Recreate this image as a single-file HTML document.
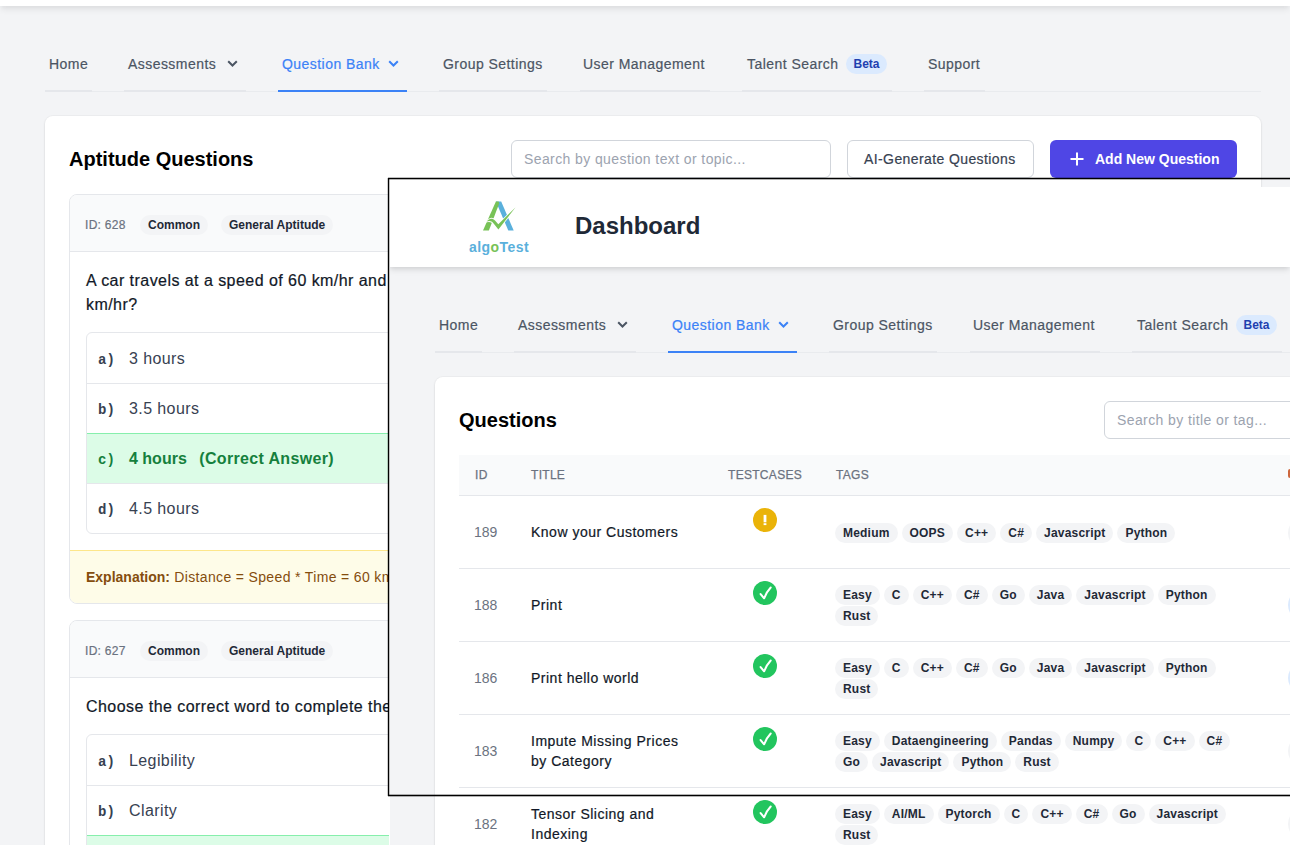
<!DOCTYPE html>
<html><head><meta charset="utf-8">
<style>
*{box-sizing:border-box;margin:0;padding:0}
html,body{width:1290px;height:845px;overflow:hidden}
body{position:relative;background:#f3f4f6;font-family:"Liberation Sans",sans-serif;color:#111827}
.a{position:absolute;white-space:nowrap}
.t14{font-size:14px;line-height:20px}
.t12{font-size:12px;line-height:16px}
.t16{font-size:16px;line-height:24px}
.nav{color:#4b5563;letter-spacing:.45px;-webkit-text-stroke:.2px currentColor}
.act{color:#3b82f6}
.tabline{position:absolute;height:1px;background:#e5e7eb}
.chev{position:absolute;width:11px;height:7px}
.card{position:absolute;background:#fff;border-radius:8px;box-shadow:0 0 0 1px rgba(0,0,0,.025),0 1px 3px rgba(0,0,0,.08)}
.badge{position:absolute;height:20px;border-radius:10px;background:#f3f4f6;color:#1f2937;font-size:12px;line-height:20px;font-weight:bold;padding:0 8px;white-space:nowrap}
.qcard{position:absolute;border:1px solid #e5e7eb;border-radius:8px;background:#fff;overflow:hidden}
.qhead{position:absolute;left:0;right:0;top:0;height:57px;background:#f9fafb;border-bottom:1px solid #e5e7eb}
.opts{position:absolute;border:1px solid #e5e7eb;border-radius:6px;overflow:hidden;background:#fff}
.opt{position:absolute;left:0;right:0;height:50px;border-top:1px solid #e5e7eb}
.ol{position:absolute;left:12px;font-family:"Liberation Mono",monospace;font-weight:bold;font-size:14px;color:#374151}
.ot{position:absolute;left:42px;font-size:16px;color:#374151;letter-spacing:.4px}
.tag{display:inline-block;height:20px;border-radius:10px;background:#f3f4f6;color:#1f2937;font-size:12px;line-height:20px;font-weight:bold;padding:0 8px;margin-right:4px;vertical-align:top;letter-spacing:.2px}
.tagl{position:absolute;left:835px;white-space:nowrap;height:21px}
.rowb{position:absolute;left:459px;right:0;height:1px;background:#e5e7eb}
.rid{position:absolute;left:474px;font-size:14px;line-height:20px;color:#6b7280}
.rtl{position:absolute;left:531px;font-size:14px;line-height:20px;color:#111827;letter-spacing:.5px;white-space:nowrap;-webkit-text-stroke:.2px #111827}
.ico{position:absolute;left:753px;width:24px;height:24px;border-radius:12px}
.th{position:absolute;top:467px;font-size:12px;line-height:16px;color:#6b7280;letter-spacing:.3px;-webkit-text-stroke:.25px #6b7280}
</style></head>
<body>
<!-- ============ BACKGROUND PAGE ============ -->
<div class="a" style="left:0;top:0;width:1290px;height:6px;background:#fff;box-shadow:0 4px 6px -1px rgba(0,0,0,.1),0 2px 4px -1px rgba(0,0,0,.06)"></div>

<!-- nav -->
<div class="tabline" style="left:45px;top:91px;width:1216px;background:#e9ebee"></div>
<div class="tabline" style="left:45px;top:90px;width:47px;height:2px"></div><div class="tabline" style="left:124px;top:90px;width:122px;height:2px"></div><div class="tabline" style="left:439px;top:90px;width:108px;height:2px"></div><div class="tabline" style="left:580px;top:90px;width:130px;height:2px"></div><div class="tabline" style="left:742px;top:90px;width:150px;height:2px"></div><div class="tabline" style="left:924px;top:90px;width:61px;height:2px"></div>
<div class="a t14 nav" style="left:49px;top:54px">Home</div>
<div class="a t14 nav" style="left:128px;top:54px">Assessments</div>
<svg class="chev" style="left:227px;top:60px" viewBox="0 0 11 7"><path d="M1.2 1.2l4.3 4.3 4.3-4.3" fill="none" stroke="#4b5563" stroke-width="2"/></svg>
<div class="a t14 nav act" style="left:282px;top:54px">Question Bank</div>
<svg class="chev" style="left:388px;top:60px" viewBox="0 0 11 7"><path d="M1.2 1.2l4.3 4.3 4.3-4.3" fill="none" stroke="#3b82f6" stroke-width="2"/></svg>
<div class="a" style="left:278px;top:90px;width:129px;height:2px;background:#3b82f6"></div>
<div class="a t14 nav" style="left:443px;top:54px">Group Settings</div>
<div class="a t14 nav" style="left:583px;top:54px">User Management</div>
<div class="a t14 nav" style="left:747px;top:54px">Talent Search</div>
<div class="a" style="left:846px;top:54px;width:41px;height:20px;border-radius:10px;background:#dbeafe;color:#1e40af;font-size:12px;line-height:20px;font-weight:bold;text-align:center">Beta</div>
<div class="a t14 nav" style="left:928px;top:54px">Support</div>

<!-- card -->
<div class="card" style="left:45px;top:116px;width:1216px;height:760px"></div>
<div class="a" style="left:69px;top:145px;font-size:20px;line-height:28px;font-weight:bold;color:#000">Aptitude Questions</div>
<div class="a" style="left:511px;top:140px;width:320px;height:38px;border:1px solid #d1d5db;border-radius:6px;background:#fff"></div>
<div class="a t14" style="left:524px;top:149px;color:#9ca3af;letter-spacing:.4px">Search by question text or topic...</div>
<div class="a" style="left:847px;top:140px;width:187px;height:38px;border:1px solid #d1d5db;border-radius:6px;background:#fff"></div>
<div class="a t14" style="left:864px;top:149px;color:#374151;letter-spacing:.4px;-webkit-text-stroke:.2px #374151">AI-Generate Questions</div>
<div class="a" style="left:1050px;top:140px;width:187px;height:38px;border-radius:6px;background:#4f46e5"></div>
<svg class="a" style="left:1069px;top:151px" width="16" height="16" viewBox="0 0 16 16"><path d="M8 1.5v13M1.5 8h13" stroke="#fff" stroke-width="2"/></svg>
<div class="a t14" style="left:1095px;top:149px;color:#fff;font-weight:bold">Add New Question</div>

<!-- question card 1 -->
<div class="qcard" style="left:69px;top:194px;width:1168px;height:410px">
  <div class="qhead"></div>
</div>
<div class="a t12" style="left:85px;top:217px;color:#6b7280;letter-spacing:.3px;-webkit-text-stroke:.2px #6b7280">ID: 628</div>
<div class="badge" style="left:140px;top:215px">Common</div>
<div class="badge" style="left:221px;top:215px">General Aptitude</div>
<div class="a t16" style="left:86px;top:269px;color:#111827;letter-spacing:.45px;line-height:24px;-webkit-text-stroke:.2px #111827">A car travels at a speed of 60 km/hr and covers a distance of 240 km. How long will it take to travel at 60<br>km/hr?</div>
<div class="opts" style="left:86px;top:332px;width:1134px;height:202px">
  <div class="opt" style="top:-1px;border-top:none"></div>
  <div class="opt" style="top:50px"></div>
  <div class="opt" style="top:100px;background:#dcfce7;border-top-color:#86efac"></div>
  <div class="opt" style="top:150px"></div>
</div>
<div class="a ol" style="left:98px;top:350px;line-height:20px">a)</div>
<div class="a ot" style="left:129px;top:347px;line-height:24px">3 hours</div>
<div class="a ol" style="left:98px;top:400px;line-height:20px">b)</div>
<div class="a ot" style="left:129px;top:397px;line-height:24px">3.5 hours</div>
<div class="a ol" style="left:98px;top:450px;line-height:20px;color:#15803d">c)</div>
<div class="a ot" style="left:129px;top:447px;line-height:24px;color:#15803d;font-weight:bold;letter-spacing:0">4 hours<span style="margin-left:12.5px;letter-spacing:.34px">(Correct Answer)</span></div>
<div class="a ol" style="left:98px;top:500px;line-height:20px">d)</div>
<div class="a ot" style="left:129px;top:497px;line-height:24px">4.5 hours</div>
<div class="a" style="left:70px;top:550px;width:1166px;height:53px;background:#fefce8;border-top:1px solid #fde68a;border-radius:0 0 7px 7px"></div>
<div class="a t14" style="left:86px;top:567px;color:#854d0e;letter-spacing:.35px"><b style="letter-spacing:0">Explanation:</b> Distance = Speed * Time = 60 km/hr * 4 hours = 240 km</div>

<!-- question card 2 -->
<div class="qcard" style="left:69px;top:620px;width:1168px;height:400px">
  <div class="qhead"></div>
</div>
<div class="a t12" style="left:85px;top:643px;color:#6b7280;letter-spacing:.3px;-webkit-text-stroke:.2px #6b7280">ID: 627</div>
<div class="badge" style="left:140px;top:641px">Common</div>
<div class="badge" style="left:221px;top:641px">General Aptitude</div>
<div class="a t16" style="left:86px;top:695px;color:#111827;letter-spacing:.45px;-webkit-text-stroke:.2px #111827">Choose the correct word to complete the sentence: The handwriting was so poor that its ___ was questioned.</div>
<div class="opts" style="left:86px;top:734px;width:1134px;height:202px">
  <div class="opt" style="top:-1px;border-top:none"></div>
  <div class="opt" style="top:50px"></div>
  <div class="opt" style="top:100px;background:#dcfce7;border-top-color:#86efac"></div>
</div>
<div class="a ol" style="left:98px;top:752px;line-height:20px">a)</div>
<div class="a ot" style="left:129px;top:749px;line-height:24px">Legibility</div>
<div class="a ol" style="left:98px;top:802px;line-height:20px">b)</div>
<div class="a ot" style="left:129px;top:799px;line-height:24px">Clarity</div>

<!-- ============ OVERLAY PAGE ============ -->
<div id="ov" class="a" style="left:390px;top:187px;width:900px;height:658px;background:#f3f4f6;overflow:hidden">
<div style="position:absolute;left:-390px;top:-187px;width:1290px;height:845px">
<!-- header -->
<div class="a" style="left:389px;top:187px;width:901px;height:80px;background:#fff;box-shadow:0 4px 6px -1px rgba(0,0,0,.1),0 2px 4px -1px rgba(0,0,0,.06)"></div>
<svg class="a" style="left:480px;top:200px" width="38" height="32" viewBox="0 0 38 32">
 <polygon points="15.9,1.5 21.2,1.5 33.7,30.5 28.3,30.5" fill="#5ab0dc"/>
 <polygon points="15.9,1.5 18.6,1.5 19.2,3.5 8.9,30.5 3.0,30.5" fill="#78c257"/>
 <path d="M6.6 21.6 C9 18.2 12.5 17.6 15 20.5 L18.3 24.3 L35.4 7.6 L18.4 29.4 L13.6 23.4 C11.5 21 9.5 20.6 6.6 21.6 Z" fill="#78c257" stroke="#fff" stroke-width="1.6" stroke-linejoin="round" paint-order="stroke"/>
</svg>
<div class="a" style="left:469px;top:238px;font-size:14px;line-height:18px;font-weight:bold;color:#5ab0dc;letter-spacing:.45px">alg<span style="color:#78c257">o</span>Test</div>
<div class="a" style="left:575px;top:210px;font-size:24px;line-height:32px;font-weight:bold;color:#1f2937">Dashboard</div>

<!-- nav -->
<div class="tabline" style="left:435px;top:352px;width:1216px;background:#e9ebee"></div>
<div class="tabline" style="left:435px;top:351px;width:47px;height:2px"></div><div class="tabline" style="left:514px;top:351px;width:122px;height:2px"></div><div class="tabline" style="left:829px;top:351px;width:108px;height:2px"></div><div class="tabline" style="left:970px;top:351px;width:130px;height:2px"></div><div class="tabline" style="left:1132px;top:351px;width:150px;height:2px"></div><div class="tabline" style="left:1314px;top:351px;width:61px;height:2px"></div>
<div class="a t14 nav" style="left:439px;top:315px">Home</div>
<div class="a t14 nav" style="left:518px;top:315px">Assessments</div>
<svg class="chev" style="left:617px;top:321px" viewBox="0 0 11 7"><path d="M1.2 1.2l4.3 4.3 4.3-4.3" fill="none" stroke="#4b5563" stroke-width="2"/></svg>
<div class="a t14 nav act" style="left:672px;top:315px">Question Bank</div>
<svg class="chev" style="left:778px;top:321px" viewBox="0 0 11 7"><path d="M1.2 1.2l4.3 4.3 4.3-4.3" fill="none" stroke="#3b82f6" stroke-width="2"/></svg>
<div class="a" style="left:668px;top:351px;width:129px;height:2px;background:#3b82f6"></div>
<div class="a t14 nav" style="left:833px;top:315px">Group Settings</div>
<div class="a t14 nav" style="left:973px;top:315px">User Management</div>
<div class="a t14 nav" style="left:1137px;top:315px">Talent Search</div>
<div class="a" style="left:1236px;top:315px;width:41px;height:20px;border-radius:10px;background:#dbeafe;color:#1e40af;font-size:12px;line-height:20px;font-weight:bold;text-align:center">Beta</div>

<!-- card -->
<div class="card" style="left:435px;top:377px;width:1216px;height:700px"></div>
<div class="a" style="left:459px;top:406px;font-size:20px;line-height:28px;font-weight:bold;color:#000">Questions</div>
<div class="a" style="left:1104px;top:401px;width:320px;height:38px;border:1px solid #d1d5db;border-radius:6px;background:#fff"></div>
<div class="a t14" style="left:1117px;top:410px;color:#9ca3af;letter-spacing:.4px">Search by title or tag...</div>

<!-- table -->
<div class="a" style="left:459px;top:455px;width:1170px;height:41px;background:#f9fafb;border-bottom:1px solid #e5e7eb"></div>
<div class="th" style="left:475px">ID</div>
<div class="th" style="left:531px">TITLE</div>
<div class="th" style="left:728px">TESTCASES</div>
<div class="th" style="left:836px">TAGS</div>
<div class="rowb" style="top:568px"></div>
<div class="rid" style="top:522px">189</div>
<div class="rtl" style="top:522px">Know your Customers</div>
<div class="ico" style="top:508px;background:#eab308"><svg width="24" height="24" viewBox="0 0 24 24"><rect x="10.6" y="6.9" width="2.8" height="7.4" fill="#fff"/><rect x="10.6" y="15.2" width="2.8" height="1.9" fill="#fff"/></svg></div>
<div class="tagl" style="top:523px"><span class="tag">Medium</span><span class="tag">OOPS</span><span class="tag">C++</span><span class="tag">C#</span><span class="tag">Javascript</span><span class="tag">Python</span></div>
<div class="rowb" style="top:641px"></div>
<div class="rid" style="top:595px">188</div>
<div class="rtl" style="top:595px">Print</div>
<div class="ico" style="top:581px;background:#22c55e"><svg width="24" height="24" viewBox="0 0 24 24"><path d="M7.6 13.1 L11.1 17.3 Q13.6 10.8 17.7 6.5" fill="none" stroke="#fff" stroke-width="2" stroke-linecap="round" stroke-linejoin="round"/></svg></div>
<div class="tagl" style="top:585px"><span class="tag">Easy</span><span class="tag">C</span><span class="tag">C++</span><span class="tag">C#</span><span class="tag">Go</span><span class="tag">Java</span><span class="tag">Javascript</span><span class="tag">Python</span></div>
<div class="tagl" style="top:606px"><span class="tag">Rust</span></div>
<div class="rowb" style="top:714px"></div>
<div class="rid" style="top:668px">186</div>
<div class="rtl" style="top:668px">Print hello world</div>
<div class="ico" style="top:654px;background:#22c55e"><svg width="24" height="24" viewBox="0 0 24 24"><path d="M7.6 13.1 L11.1 17.3 Q13.6 10.8 17.7 6.5" fill="none" stroke="#fff" stroke-width="2" stroke-linecap="round" stroke-linejoin="round"/></svg></div>
<div class="tagl" style="top:658px"><span class="tag">Easy</span><span class="tag">C</span><span class="tag">C++</span><span class="tag">C#</span><span class="tag">Go</span><span class="tag">Java</span><span class="tag">Javascript</span><span class="tag">Python</span></div>
<div class="tagl" style="top:679px"><span class="tag">Rust</span></div>
<div class="rowb" style="top:787px"></div>
<div class="rid" style="top:741px">183</div>
<div class="rtl" style="top:731px">Impute Missing Prices<br>by Category</div>
<div class="ico" style="top:727px;background:#22c55e"><svg width="24" height="24" viewBox="0 0 24 24"><path d="M7.6 13.1 L11.1 17.3 Q13.6 10.8 17.7 6.5" fill="none" stroke="#fff" stroke-width="2" stroke-linecap="round" stroke-linejoin="round"/></svg></div>
<div class="tagl" style="top:731px"><span class="tag">Easy</span><span class="tag">Dataengineering</span><span class="tag">Pandas</span><span class="tag">Numpy</span><span class="tag">C</span><span class="tag">C++</span><span class="tag">C#</span></div>
<div class="tagl" style="top:752px"><span class="tag">Go</span><span class="tag">Javascript</span><span class="tag">Python</span><span class="tag">Rust</span></div>
<div class="rowb" style="top:860px"></div>
<div class="rid" style="top:814px">182</div>
<div class="rtl" style="top:804px">Tensor Slicing and<br>Indexing</div>
<div class="ico" style="top:800px;background:#22c55e"><svg width="24" height="24" viewBox="0 0 24 24"><path d="M7.6 13.1 L11.1 17.3 Q13.6 10.8 17.7 6.5" fill="none" stroke="#fff" stroke-width="2" stroke-linecap="round" stroke-linejoin="round"/></svg></div>
<div class="tagl" style="top:804px"><span class="tag">Easy</span><span class="tag">AI/ML</span><span class="tag">Pytorch</span><span class="tag">C</span><span class="tag">C++</span><span class="tag">C#</span><span class="tag">Go</span><span class="tag">Javascript</span></div>
<div class="tagl" style="top:825px"><span class="tag">Rust</span></div>
<div class="a" style="left:1288px;top:469px;width:4px;height:9px;background:#c2410c;border-radius:2px;opacity:.8"></div>
<div class="a" style="left:1288px;top:517px;width:32px;height:32px;border-radius:16px;background:#f3f4f6"></div>
<div class="a" style="left:1288px;top:589px;width:32px;height:32px;border-radius:16px;background:#dbeafe"></div>
<div class="a" style="left:1288px;top:662px;width:32px;height:32px;border-radius:16px;background:#dbeafe"></div>
<div class="a" style="left:1288px;top:735px;width:32px;height:32px;border-radius:16px;background:#f3f4f6"></div>
<div class="a" style="left:1288px;top:808px;width:32px;height:32px;border-radius:16px;background:#f3f4f6"></div>
</div>
</div>

<!-- frame annotation -->
<div class="a" style="left:389px;top:178px;width:1px;height:667px;background:#fff"></div>
<div class="a" style="left:388px;top:177px;width:910px;height:3px;background:linear-gradient(to bottom,rgba(0,0,0,.25) 0,rgba(0,0,0,.25) 33%,#000 33%,#000 66%,rgba(0,0,0,.3) 66%)"></div>
<div class="a" style="left:387px;top:178px;width:3px;height:618px;background:linear-gradient(to right,rgba(0,0,0,.2) 0,rgba(0,0,0,.2) 33%,#000 33%,#000 66%,rgba(0,0,0,.25) 66%)"></div>
<div class="a" style="left:388px;top:794px;width:910px;height:3px;background:linear-gradient(to bottom,rgba(0,0,0,.3) 0,rgba(0,0,0,.3) 33%,#000 33%,#000 66%,rgba(0,0,0,.3) 66%)"></div>
</body></html>
